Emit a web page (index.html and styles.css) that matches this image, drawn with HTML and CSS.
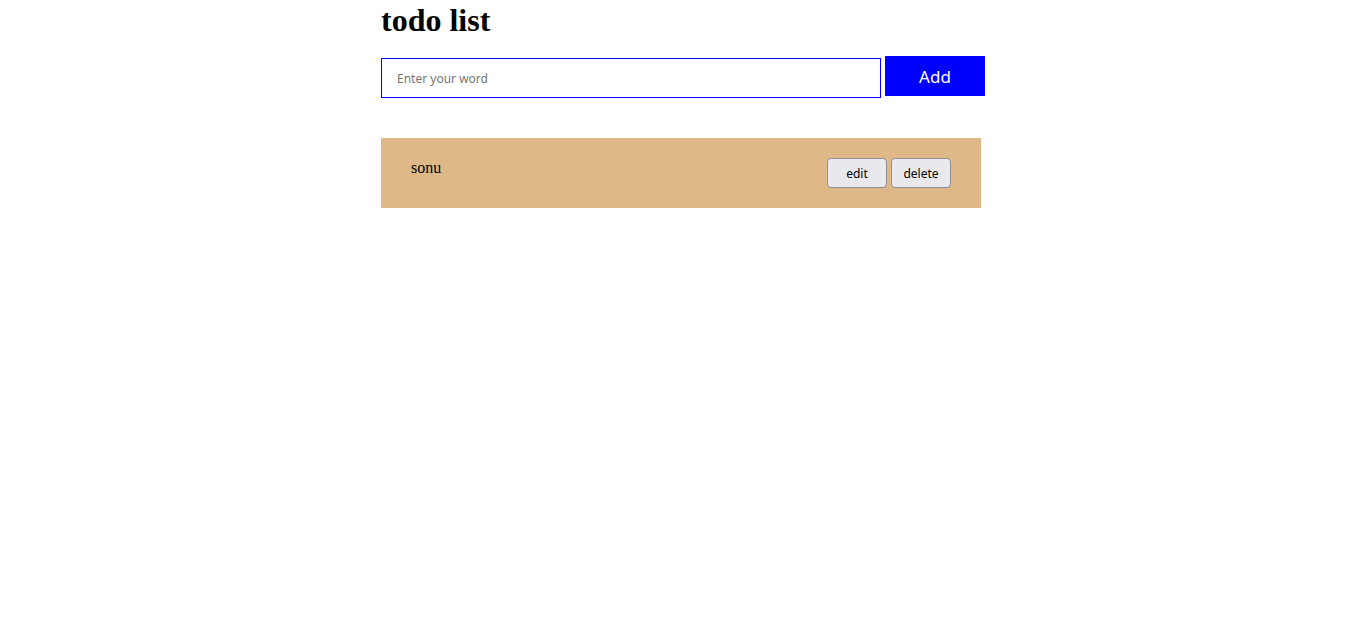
FILE: index.html
```html
<!DOCTYPE html>
<html>
<head>
<meta charset="utf-8">
<link rel="stylesheet" href="styles.css">
</head>
<body>
<div class="container">
  <h1 class="title">todo list</h1>
  <div class="form">
    <input class="word-input" type="text" placeholder="Enter your word">
    <button class="add-btn">Add</button>
  </div>
  <ul class="list">
    <li class="item">
      <span class="item-text">sonu</span>
      <div class="actions">
        <button class="act-btn">edit</button>
        <button class="act-btn">delete</button>
      </div>
    </li>
  </ul>
</div>
</body>
</html>
```
FILE: styles.css
```css
html, body {
  margin: 0;
  padding: 0;
  background: #fff;
}
body {
  font-family: "Liberation Serif", "Times New Roman", serif;
}
.container {
  width: 604px;
  margin: 0 auto;
}
.title {
  margin: 0;
  font-size: 32px;
  line-height: 40px;
  font-weight: bold;
  color: #000;
}
.form {
  display: flex;
  align-items: flex-start;
  gap: 4px;
  margin-top: 16px;
}
.word-input {
  box-sizing: border-box;
  width: 500px;
  height: 40px;
  margin: 2px 0 0 0;
  border: 1px solid #0000ff;
  padding: 0 15px;
  font-family: "Noto Sans", sans-serif;
  font-size: 12px;
  outline: none;
}
.word-input::placeholder {
  color: #757575;
}
.add-btn {
  width: 100px;
  height: 40px;
  border: none;
  background: #0000ff;
  color: #fff;
  font-family: "Noto Sans", sans-serif;
  font-size: 17px;
  padding: 0;
}
.list {
  list-style: none;
  margin: 40px 0 0 0;
  padding: 0;
}
.item {
  width: 600px;
  box-sizing: border-box;
  background: #deb887;
  padding: 20px 30px;
  display: flex;
  justify-content: space-between;
  align-items: flex-start;
}
.item-text {
  font-size: 16px;
  line-height: 19px;
  color: #000;
}
.actions {
  display: flex;
  gap: 4px;
}
.act-btn {
  width: 60px;
  height: 30px;
  box-sizing: border-box;
  background: #e9e9ed;
  border: 1px solid #8f8f9d;
  border-radius: 4px;
  font-family: "Noto Sans", sans-serif;
  font-size: 12px;
  color: #000;
  padding: 0;
}
```
